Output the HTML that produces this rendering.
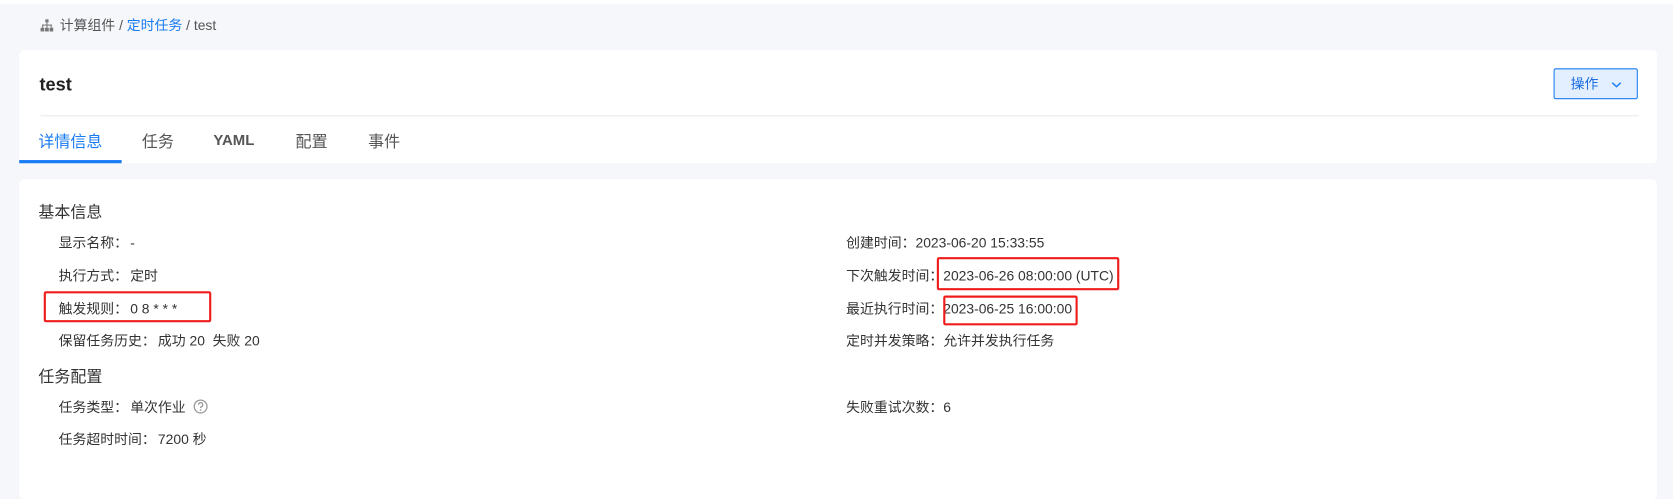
<!DOCTYPE html>
<html><head><meta charset="utf-8"><style>
*{margin:0;padding:0;box-sizing:border-box}
html,body{width:1673px;height:478px;overflow:hidden;background:#f6f7fb}
#w{position:absolute;left:0;top:0;width:1568px;height:448px;transform:scale(1.067);transform-origin:0 0;font-family:"Liberation Sans","Noto Sans CJK SC",sans-serif;color:#333}
.a{position:absolute;white-space:nowrap}
.card{position:absolute;background:#fff;border-radius:5px}
.t{font-size:13px;color:#333;line-height:16px}
.c{margin-right:2px}
.red{position:absolute;border:2px solid #f01c1c;border-radius:2px}
</style></head><body><div id="w">
<div class="a" style="left:0;top:0;width:1568px;height:4px;background:#fff"></div>
<svg class="a" style="left:38px;top:18px" width="12" height="12" viewBox="0 0 12 12" fill="#777"><rect x="4.5" y="0" width="3" height="3"/><rect x="5.5" y="3" width="1" height="3"/><rect x="1.5" y="5" width="9" height="1"/><rect x="1.5" y="5" width="1" height="3"/><rect x="9.5" y="5" width="1" height="3"/><rect x="5.5" y="5" width="1" height="3"/><rect x="0" y="8" width="3.5" height="3.5"/><rect x="4.2" y="8" width="3.5" height="3.5"/><rect x="8.5" y="8" width="3.5" height="3.5"/></svg>
<div class="a t" style="left:56px;top:16px;color:#555">计算组件 / <span style="color:#1a7cf2">定时任务</span> / test</div>
<div class="card" style="left:18px;top:47px;width:1535px;height:106px"></div>
<div class="a" style="left:37px;top:70px;font-size:17px;font-weight:bold;color:#222">test</div>
<div class="a" style="left:1456px;top:64px;width:79px;height:29px;border:1px solid #1a7cf2;border-radius:2px;background:#e3efff;color:#1a6ee0;font-size:13px;line-height:27px;padding-left:15px">操作<svg style="position:absolute;left:53px;top:11px" width="10" height="7" viewBox="0 0 10 7"><path d="M1 1.5 L5 5.2 L9 1.5" stroke="#1a7cf2" stroke-width="1.3" fill="none"/></svg></div>
<div class="a" style="left:38px;top:108px;width:1498px;height:1px;background:#e8eaef"></div>
<div class="a" style="left:36px;top:122px;font-size:15px;color:#1a7cf2">详情信息</div>
<div class="a" style="left:18px;top:150px;width:96px;height:3px;background:#1a7cf2"></div>
<div class="a" style="left:133px;top:122px;font-size:15px;color:#555">任务</div>
<div class="a" style="left:200px;top:123px;font-size:14px;color:#555;font-weight:bold">YAML</div>
<div class="a" style="left:277px;top:122px;font-size:15px;color:#555">配置</div>
<div class="a" style="left:345px;top:122px;font-size:15px;color:#555">事件</div>
<div class="card" style="left:18px;top:168px;width:1535px;height:300px"></div>
<div class="a" style="left:36px;top:188px;font-size:15px;color:#333">基本信息</div>
<div class="a t" style="left:55px;top:220px">显示名称：<span class="c"></span>-</div>
<div class="a t" style="left:55px;top:251px">执行方式：<span class="c"></span>定时</div>
<div class="a t" style="left:55px;top:282px">触发规则：<span class="c"></span>0 8 * * *</div>
<div class="a t" style="left:55px;top:312px">保留任务历史：<span class="c"></span>成功 20&nbsp; 失败 20</div>
<div class="a" style="left:36px;top:342px;font-size:15px;color:#333">任务配置</div>
<div class="a t" style="left:55px;top:374px">任务类型：<span class="c"></span>单次作业 <svg style="vertical-align:-2px;margin-left:3px" width="14" height="14" viewBox="0 0 14 14"><circle cx="7" cy="7" r="6" stroke="#999" fill="none" stroke-width="1.2"/><path d="M5 5.4a2 2 0 1 1 2.6 1.9c-.5.2-.6.5-.6 1.1" stroke="#999" fill="none" stroke-width="1.2"/><circle cx="7" cy="10.2" r=".8" fill="#999"/></svg></div>
<div class="a t" style="left:55px;top:404px">任务超时时间：<span class="c"></span>7200 秒</div>
<div class="a t" style="left:793px;top:220px">创建时间：2023-06-20 15:33:55</div>
<div class="a t" style="left:793px;top:251px">下次触发时间：2023-06-26 08:00:00 (UTC)</div>
<div class="a t" style="left:793px;top:282px">最近执行时间：2023-06-25 16:00:00</div>
<div class="a t" style="left:793px;top:312px">定时并发策略：允许并发执行任务</div>
<div class="a t" style="left:793px;top:374px">失败重试次数：6</div>
<div class="red" style="left:41px;top:273px;width:157px;height:29px"></div>
<div class="red" style="left:878px;top:241px;width:171px;height:31px"></div>
<div class="red" style="left:884px;top:277px;width:126px;height:28px"></div>
</div></body></html>
